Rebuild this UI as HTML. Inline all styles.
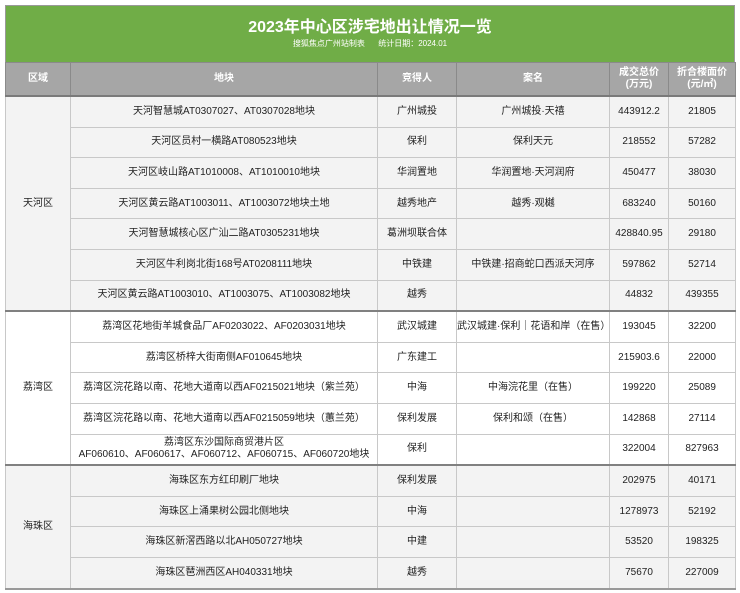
<!DOCTYPE html>
<html><head><meta charset="utf-8"><style>
body{margin:0;background:#fff;width:740px;height:593px;overflow:hidden;font-family:"Liberation Sans","Noto Sans CJK SC",sans-serif;}
.wrap{position:absolute;left:5px;top:5px;width:730px;}
.title{background:#70ad47;height:57px;text-align:center;color:#fff;border:1px solid #999;border-bottom:none;box-sizing:border-box;}
.title h1{margin:0;padding-top:12px;font-size:16px;font-weight:bold;line-height:20px;}
.title p{margin:1px 0 0;font-size:8px;line-height:10px;}
table{border-collapse:collapse;width:730px;table-layout:fixed;font-size:10px;color:#222;}
td,th{border:1px solid #c8c8c8;text-align:center;padding:0;line-height:12px;}
th{background:#a6a6a6;color:#fff;font-weight:bold;height:32px;border-color:#8a8a8a;}
tr.hd th{border-bottom:2px solid #7a7a7a;}
.g td{background:#f3f3f3;}
.w td{background:#fff;}
tr.sep td{border-top:2px solid #808080;}
tr td{height:29.6px;}
table{border-left:1px solid #999;border-right:1px solid #999;border-bottom:2px solid #999;}
</style></head><body>
<div class="wrap">
<div class="title"><h1>2023年中心区涉宅地出让情况一览</h1><p>搜狐焦点广州站制表 &nbsp;&nbsp;&nbsp;&nbsp; 统计日期：2024.01</p></div>
<table>
<colgroup><col style="width:65px"><col style="width:307px"><col style="width:79px"><col style="width:153px"><col style="width:59px"><col style="width:67px"></colgroup>
<tr class="hd"><th>区域</th><th>地块</th><th>竞得人</th><th>案名</th><th>成交总价<br>(万元)</th><th>折合楼面价<br>(元/㎡)</th></tr>
<tbody class="g">
<tr><td rowspan="7">天河区</td><td>天河智慧城AT0307027、AT0307028地块</td><td>广州城投</td><td>广州城投·天禧</td><td>443912.2</td><td>21805</td></tr>
<tr><td>天河区员村一横路AT080523地块</td><td>保利</td><td>保利天元</td><td>218552</td><td>57282</td></tr>
<tr><td>天河区岐山路AT1010008、AT1010010地块</td><td>华润置地</td><td>华润置地·天河润府</td><td>450477</td><td>38030</td></tr>
<tr><td>天河区黄云路AT1003011、AT1003072地块土地</td><td>越秀地产</td><td>越秀·观樾</td><td>683240</td><td>50160</td></tr>
<tr><td>天河智慧城核心区广汕二路AT0305231地块</td><td>葛洲坝联合体</td><td></td><td>428840.95</td><td>29180</td></tr>
<tr><td>天河区牛利岗北街168号AT0208111地块</td><td>中铁建</td><td>中铁建·招商蛇口西派天河序</td><td>597862</td><td>52714</td></tr>
<tr><td>天河区黄云路AT1003010、AT1003075、AT1003082地块</td><td>越秀</td><td></td><td>44832</td><td>439355</td></tr>
</tbody>
<tbody class="w">
<tr class="sep"><td rowspan="5">荔湾区</td><td>荔湾区花地街羊城食品厂AF0203022、AF0203031地块</td><td>武汉城建</td><td>武汉城建·保利｜花语和岸（在售）</td><td>193045</td><td>32200</td></tr>
<tr><td>荔湾区桥梓大街南侧AF010645地块</td><td>广东建工</td><td></td><td>215903.6</td><td>22000</td></tr>
<tr><td>荔湾区浣花路以南、花地大道南以西AF0215021地块（紫兰苑）</td><td>中海</td><td>中海浣花里（在售）</td><td>199220</td><td>25089</td></tr>
<tr><td>荔湾区浣花路以南、花地大道南以西AF0215059地块（蕙兰苑）</td><td>保利发展</td><td>保利和颂（在售）</td><td>142868</td><td>27114</td></tr>
<tr><td>荔湾区东沙国际商贸港片区<br>AF060610、AF060617、AF060712、AF060715、AF060720地块</td><td>保利</td><td></td><td>322004</td><td>827963</td></tr>
</tbody>
<tbody class="g">
<tr class="sep"><td rowspan="4">海珠区</td><td>海珠区东方红印刷厂地块</td><td>保利发展</td><td></td><td>202975</td><td>40171</td></tr>
<tr><td>海珠区上涌果树公园北侧地块</td><td>中海</td><td></td><td>1278973</td><td>52192</td></tr>
<tr><td>海珠区新滘西路以北AH050727地块</td><td>中建</td><td></td><td>53520</td><td>198325</td></tr>
<tr><td>海珠区琶洲西区AH040331地块</td><td>越秀</td><td></td><td>75670</td><td>227009</td></tr>
</tbody>
</table>
</div>
</body></html>
